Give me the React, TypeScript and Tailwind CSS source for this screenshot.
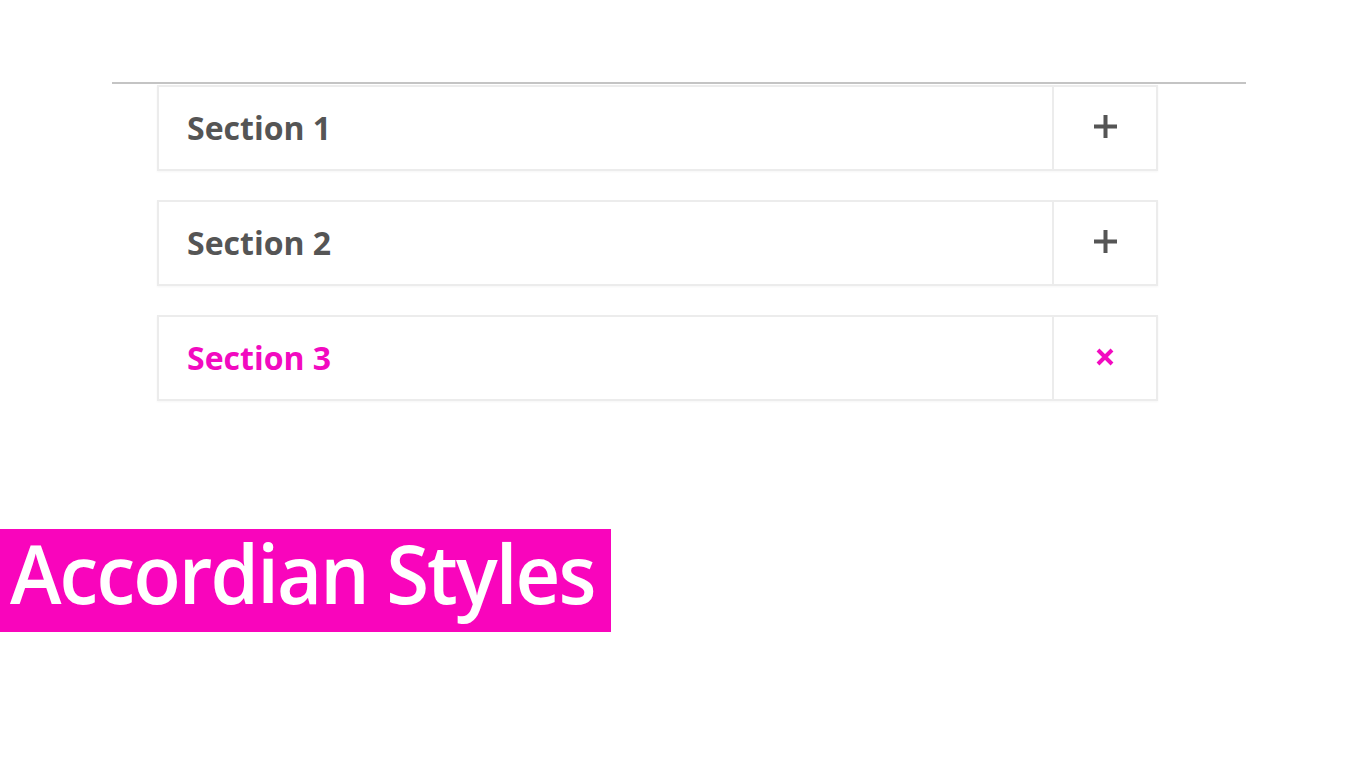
import React, { useState } from 'react';

type Section = { id: number; title: string };

const sections: Section[] = [
  { id: 1, title: 'Section 1' },
  { id: 2, title: 'Section 2' },
  { id: 3, title: 'Section 3' },
];

const PlusIcon = () => (
  <svg width="25" height="25" viewBox="0 0 25 25">
    <path d="M12.5 1v23M1 12.5h23" stroke="currentColor" strokeWidth="4" />
  </svg>
);

const CloseIcon = () => (
  <svg width="20" height="20" viewBox="0 0 20 20">
    <path d="M3 3l14 14M17 3L3 17" stroke="currentColor" strokeWidth="4" />
  </svg>
);

export default function App() {
  const [open, setOpen] = useState<number>(3);

  return (
    <div className="w-[1366px] h-[768px] bg-white relative overflow-hidden" style={{ fontFamily: '"Open Sans", "Noto Sans", sans-serif' }}>
      <div className="pt-[82px] pl-[112px]">
        <div className="w-[1134px] h-[2px] bg-[#c4c4c4]" />
        <div className="flex flex-col gap-[29px] pl-[45px] pt-px">
          {sections.map((s) => {
            const active = open === s.id;
            return (
              <div
                key={s.id}
                onClick={() => setOpen(active ? 0 : s.id)}
                className="w-[1001px] h-[86px] flex border-2 border-[#ececec] shadow-[0_1px_2px_rgba(0,0,0,0.04)] cursor-pointer"
              >
                <div
                  className={`flex-1 flex items-center pl-[28px] text-[32px] font-bold ${
                    active ? 'text-[#f20ac0]' : 'text-[#555555]'
                  }`}
                >
                  {s.title}
                </div>
                <div
                  className={`w-[104px] border-l-2 border-[#ececec] flex items-center justify-center pb-[3px] ${
                    active ? 'text-[#f20ac0]' : 'text-[#555555]'
                  }`}
                >
                  {active ? <CloseIcon /> : <PlusIcon />}
                </div>
              </div>
            );
          })}
        </div>
      </div>

      <div className="mt-[128px] w-[611px] h-[103px] bg-[#f905bc] flex items-center pl-[10px] pb-[18px]">
        <span
          className="text-white text-[82px] font-semibold leading-none tracking-[-2px] whitespace-nowrap origin-left scale-x-[0.95] inline-block"
          style={{ fontFamily: '"Open Sans", sans-serif' }}
        >
          Accordian Styles
        </span>
      </div>
    </div>
  );
}
